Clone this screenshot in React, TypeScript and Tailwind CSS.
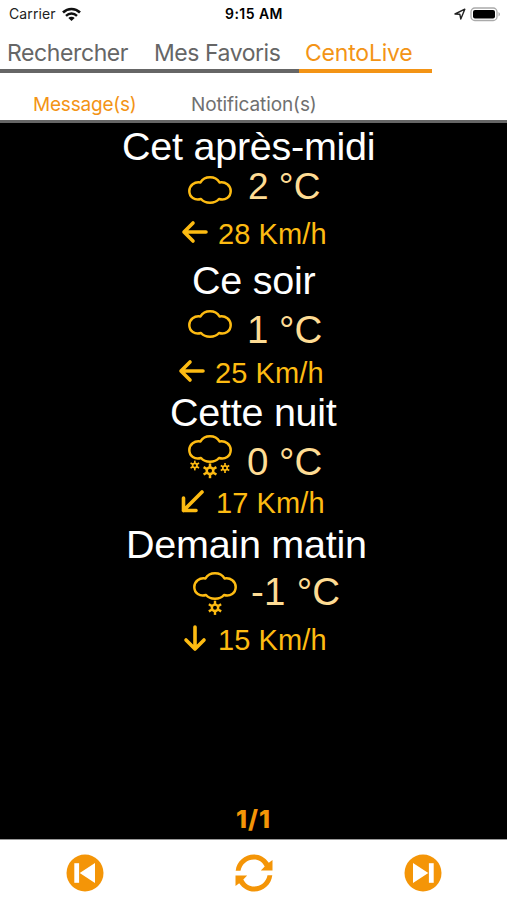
type IconName = 'cloud' | 'snow' | 'light-snow';

interface Forecast {
  title: string;
  icon: IconName;
  temperature: string;
  wind: string;
  arrow: number;
  titleClass: string;
  rowClass: string;
  iconClass: string;
  temperatureClass: string;
  windClass: string;
}

const forecasts: Forecast[] = [
  {
    title: 'Cet après-midi',
    icon: 'cloud',
    temperature: '2 °C',
    wind: '28 Km/h',
    arrow: 0,
    titleClass: 'pl-[122px]',
    rowClass: 'h-[50px] pl-[188px]',
    iconClass: 'mt-[9px]',
    temperatureClass: 'ml-[16px] mt-px text-[37px]',
    windClass: 'h-11 pl-[181px]',
  },
  {
    title: 'Ce soir',
    icon: 'cloud',
    temperature: '1 °C',
    wind: '25 Km/h',
    arrow: 0,
    titleClass: 'pl-[192px]',
    rowClass: 'h-[55px] pl-[188px]',
    iconClass: 'mt-[9px]',
    temperatureClass: 'ml-[15px] mt-[10px] text-[38.5px]',
    windClass: 'h-[37px] pl-[178px]',
  },
  {
    title: 'Cette nuit',
    icon: 'snow',
    temperature: '0 °C',
    wind: '17 Km/h',
    arrow: -45,
    titleClass: 'pl-[170px]',
    rowClass: 'h-[53px] pl-[188px]',
    iconClass: 'mt-[2px]',
    temperatureClass: 'ml-[15px] mt-[10px] text-[38.5px]',
    windClass: 'h-[39px] pl-[179px]',
  },
  {
    title: 'Demain matin',
    icon: 'light-snow',
    temperature: '-1 °C',
    wind: '15 Km/h',
    arrow: -90,
    titleClass: 'pl-[126px]',
    rowClass: 'h-[58px] pl-[193px]',
    iconClass: 'mt-[7px]',
    temperatureClass: 'ml-[14px] mt-[8px] text-[38.5px] tracking-[0.25px]',
    windClass: 'h-[37px] pl-[181px]',
  },
];

// six-pointed flake, drawn around its own centre
function Flake({ x, y, size }: { x: number; y: number; size: number }) {
  return (
    <g
      transform={`translate(${x} ${y}) scale(${size})`}
      strokeWidth={2.5}
      strokeLinecap="butt"
    >
      <circle r="3.3" />
      {[0, 60, 120, 180, 240, 300].map((angle) => (
        <path key={angle} d="M0-3V-7.4" transform={`rotate(${angle})`} />
      ))}
    </g>
  );
}

function WeatherIcon({ name }: { name: IconName }) {
  return (
    <svg
      width="44"
      height="44"
      viewBox="0 0 44 44"
      fill="none"
      stroke="#fdbb12"
      strokeWidth="2.5"
      strokeLinejoin="round"
    >
      <path d="M12.5 6.4C14.5 3 17.8 1.3 22 1.3S29.5 3 31.5 6.4C37.500 5.200 42.700 9.400 42.700 15C42.700 21 37.200 25 31 23C29 25.400 26 26.700 22 26.700S15 25.400 13 23C6.800 25 1.300 21 1.300 15C1.300 9.400 6.500 5.200 12.500 6.400Z" />
      {name === 'snow' && (
        <>
          <Flake x={6.8} y={30.5} size={0.66} />
          <Flake x={22} y={35.8} size={1} />
          <Flake x={37} y={33} size={0.66} />
        </>
      )}
      {name === 'light-snow' && <Flake x={22} y={35.8} size={0.96} />}
    </svg>
  );
}

function WindArrow({ angle }: { angle: number }) {
  return (
    <svg
      className="mt-px"
      width="28"
      height="28"
      viewBox="-14 -14 28 28"
      fill="none"
      stroke="#fdbb12"
      strokeWidth="3.6"
      strokeLinecap="round"
      strokeLinejoin="round"
    >
      {angle === -45 ? (
        <path d="M9-9L-9.500 9.500M-9.500-3V9.500H3" />
      ) : (
        <path d="M11 0H-11M-2-9L-11 0L-2 9" transform={`rotate(${angle})`} />
      )}
    </svg>
  );
}

function StatusBar() {
  return (
    <div className="flex h-7 items-center text-[14px] leading-none text-[#222]">
      <div className="flex w-[225px] items-center pl-[9px]">
        <span className="w-[53px] tracking-[0.1px]">Carrier</span>
        <svg width="19" height="15" viewBox="0 0 19 15" fill="none" stroke="#111">
          <path d="M1 5.5C5.8.8 13.2.8 18 5.5" strokeWidth="2.6" />
          <path d="M4 8.8C7.2 5.8 11.8 5.8 15 8.8" strokeWidth="2.4" />
          <path d="M9.5 14L6.3 10.9C8 9.3 11 9.3 12.7 10.9Z" fill="#111" stroke="none" />
        </svg>
      </div>
      <span className="w-[229px] font-semibold tracking-[0.45px] text-black">9:15 AM</span>
      <svg width="12" height="12" viewBox="0 0 12 12" fill="none" stroke="#222" strokeWidth="1.4">
        <path d="M1 6L10.8 1.2L6.8 11L5.8 6.2Z" strokeLinejoin="round" />
      </svg>
      <svg className="ml-1" width="31" height="15" viewBox="0 0 31 15">
        <rect x="1" y="1" width="26" height="12.5" rx="3.8" fill="#fff" stroke="#aaa" strokeWidth="1.3" />
        <rect x="3" y="3" width="22" height="8.5" rx="2" fill="#000" />
        <path d="M28.5 5V9.5C30.5 8.5 30.5 6 28.5 5Z" fill="#aaa" />
      </svg>
    </div>
  );
}

function SkipIcon({ flipped }: { flipped?: boolean }) {
  return (
    <svg width="38" height="38" viewBox="-19 -19 38 38">
      <circle r="18.5" fill="#f49507" />
      <g fill="#fff" transform={flipped ? 'scale(-1 1)' : undefined}>
        <rect x="-10.7" y="-9.8" width="4.8" height="19.6" />
        <path d="M-5.3 0L10-10V10Z" />
      </g>
    </svg>
  );
}

function RefreshIcon() {
  return (
    <svg width="38" height="38" viewBox="-19 -19 38 38" fill="#f49507">
      {[0, 180].map((angle) => (
        <path
          key={angle}
          d="M-18.3-2.3C-17.3-11.5-9.5-18.5 0-18.5C6-18.5 11.3-15.3 14.8-10.2L18.5-13V-2.5H6.800L10.700-6.600C8.500-11 4.700-13.600 0-13.600C-6.800-13.600-12.300-9-13.500-2.300Z"
          transform={`rotate(${angle})`}
        />
      ))}
    </svg>
  );
}

export default function App() {
  return (
    <div className="flex h-[900px] w-[507px] flex-col overflow-hidden bg-white font-['Inter',sans-serif] whitespace-nowrap">
      <StatusBar />

      <nav className="flex h-[45px] text-[23px] leading-[50px] text-[#666]">
        <button className="w-[147px] border-b-4 border-[#666] pl-[7px] text-left tracking-[-0.4px]">
          Rechercher
        </button>
        <button className="w-[152px] border-b-4 border-[#666] pl-[7px] text-left tracking-[-0.45px]">
          Mes Favoris
        </button>
        <button className="w-[133px] border-b-4 border-[#f39416] pl-[6px] text-left tracking-[-0.2px] text-[#f39416]">
          CentoLive
        </button>
      </nav>

      <div className="flex h-[50px] border-b-[3px] border-[#666] pt-[17px] text-[19px] leading-[28px] text-[#707070]">
        <button className="w-[157px] pl-[33px] text-left tracking-[-0.2px] text-[#f39416]">
          Message(s)
        </button>
        <button className="pl-[34px] text-left tracking-[-0.1px]">Notification(s)</button>
      </div>

      <main className="flex h-[716px] flex-col bg-black pt-1 font-['Liberation_Sans',Arial,sans-serif]">
        {forecasts.map((item) => (
          <section key={item.title}>
            <h2
              className={`h-10 text-[39.5px] leading-[39px] tracking-[-0.25px] text-white ${item.titleClass}`}
            >
              {item.title}
            </h2>
            <div className={`flex items-start ${item.rowClass}`}>
              <div className={item.iconClass}>
                <WeatherIcon name={item.icon} />
              </div>
              <span className={`leading-[38px] text-[#fedc94] ${item.temperatureClass}`}>
                {item.temperature}
              </span>
            </div>
            <div className={`flex items-start ${item.windClass}`}>
              <WindArrow angle={item.arrow} />
              <span className="ml-[9px] text-[29px] leading-[34px] tracking-[0.1px] text-[#fdbb12]">
                {item.wind}
              </span>
            </div>
          </section>
        ))}
        <p className="mt-auto pb-[5px] text-center font-['Inter',sans-serif] text-[25px] leading-[30px] font-extrabold tracking-[1px] text-[#f49507]">
          1/1
        </p>
      </main>

      <footer className="flex h-[61px] items-center justify-between border-t border-[#999] pt-[6px] pr-[65px] pl-[66px]">
        <button>
          <SkipIcon />
        </button>
        <button>
          <RefreshIcon />
        </button>
        <button>
          <SkipIcon flipped />
        </button>
      </footer>
    </div>
  );
}
